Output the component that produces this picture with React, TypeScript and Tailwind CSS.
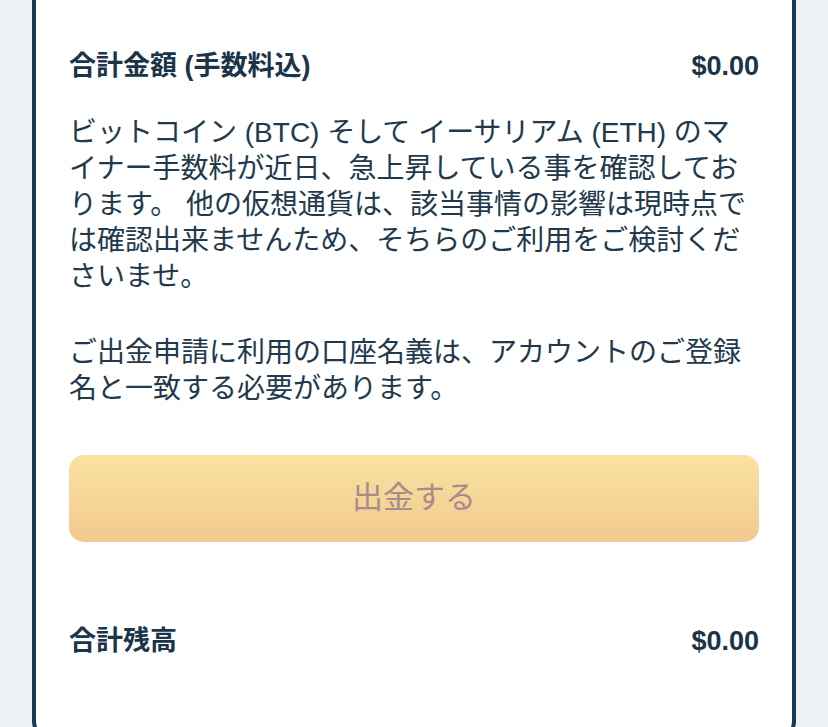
import React from 'react';

const font = "font-['Liberation_Sans','Noto_Sans_CJK_JP',sans-serif]";

const TotalRow: React.FC<{ label: string; amount: string }> = ({ label, amount }) => (
  <div className="flex items-center justify-between text-[27px] leading-[36px] font-bold text-[#1c3449]">
    <span>{label}</span>
    <span>{amount}</span>
  </div>
);

const App: React.FC = () => {
  return (
    <div className={`h-[727px] w-full overflow-hidden bg-[#edf2f4] ${font}`}>
      <div className="mx-[32px] bg-white border-x-4 border-b-4 border-[#1b3a51] rounded-b-[22px] px-[33px] pt-[48px] pb-[80px]">
        <TotalRow label="合計金額 (手数料込)" amount="$0.00" />

        {/* narrower than the row so the Japanese lines break where the app's do */}
        <div className="mt-[31px] max-w-[683px] text-[28px] leading-[36px] text-[#22384c]">
          <p>
            ビットコイン (BTC) そして イーサリアム (ETH) のマイナー手数料が近日、急上昇している事を確認しております。 他の仮想通貨は、該当事情の影響は現時点では確認出来ませんため、そちらのご利用をご検討くださいませ。
          </p>
          <p className="mt-[40px]">
            ご出金申請に利用の口座名義は、アカウントのご登録名と一致する必要があります。
          </p>
        </div>

        <button
          type="button"
          disabled
          className="mt-[48px] w-full h-[87px] rounded-[15px] bg-gradient-to-b from-[#f9e2a1] to-[#f3c990] text-[31px] text-[#a78b8d]"
        >
          出金する
        </button>

        <div className="mt-[81px]">
          <TotalRow label="合計残高" amount="$0.00" />
        </div>
      </div>
    </div>
  );
};

export default App;
